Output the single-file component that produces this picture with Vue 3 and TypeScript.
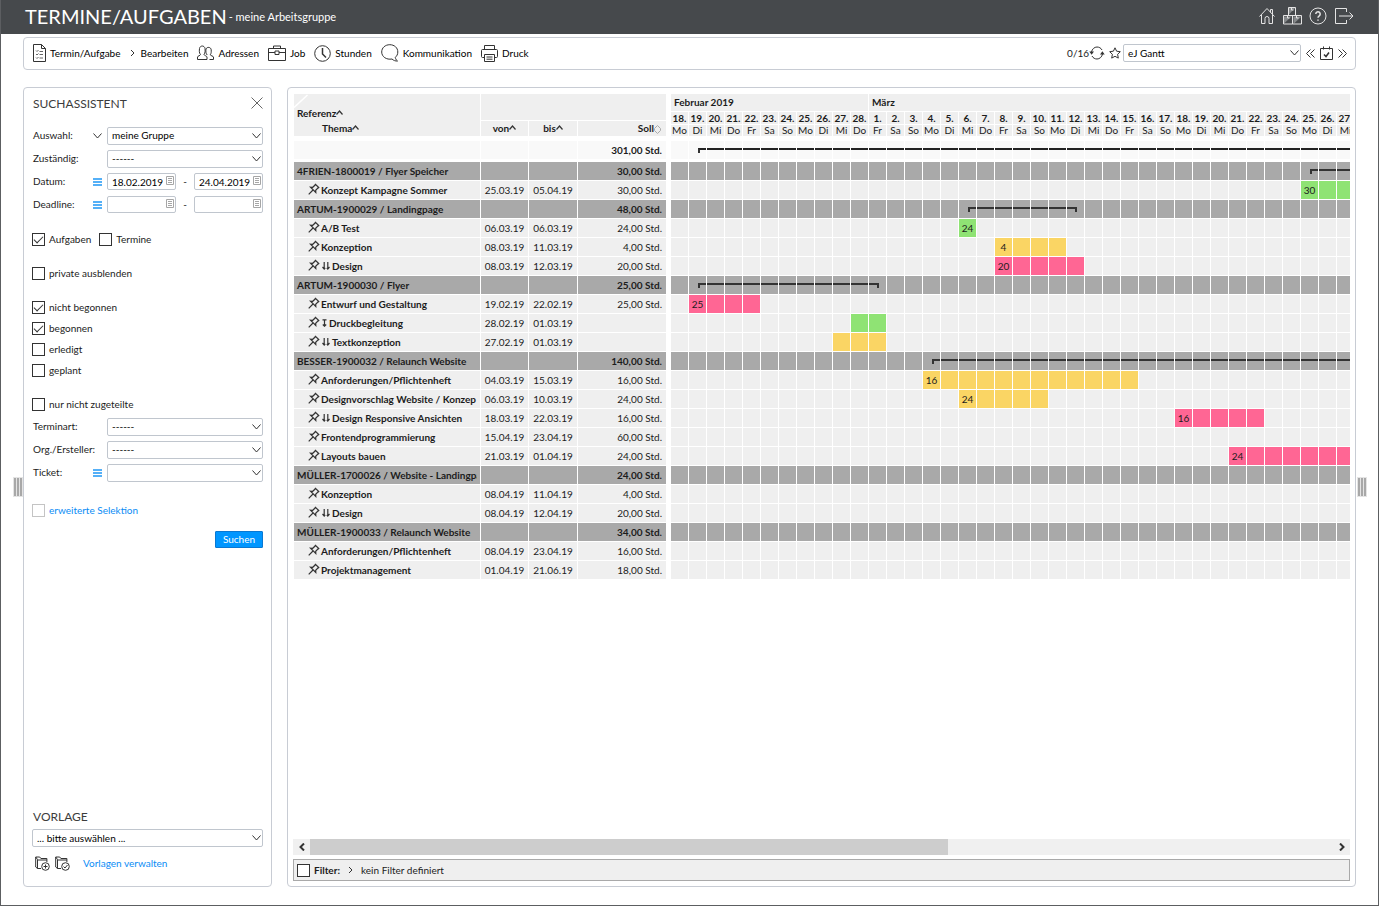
<script setup lang="ts">
import { ref } from 'vue'

type Tone = 'green' | 'yellow' | 'pink'
interface Row {
  kind: 'group' | 'task'
  title: string
  from: string
  to: string
  hours: string
  tone?: Tone
  label?: string
  mark?: 'double' | 'single'
}
interface Cell { tone: string; line: string; label: string }

const DAY = 86400000
const firstDay = Date.UTC(2019, 1, 18)
const dayCount = 38
const weekdays = ['So', 'Mo', 'Di', 'Mi', 'Do', 'Fr', 'Sa']

const days = Array.from({ length: dayCount }, (_, i) => {
  const d = new Date(firstDay + i * DAY)
  return { num: d.getUTCDate() + '.', name: weekdays[d.getUTCDay()] }
})
const months = [
  { name: 'Februar 2019', span: 11 },
  { name: 'März', span: 27 },
]

const group = (title: string, from: string, to: string, hours: string): Row =>
  ({ kind: 'group', title, from, to, hours })
const task = (title: string, from: string, to: string, hours: string, tone: Tone, label = '', mark?: 'double' | 'single'): Row =>
  ({ kind: 'task', title, from, to, hours, tone, label, mark })

const rows: Row[] = [
  group('4FRIEN-1800019 / Flyer Speicher', '25.03.19', '05.04.19', '30,00 Std.'),
  task('Konzept Kampagne Sommer', '25.03.19', '05.04.19', '30,00 Std.', 'green', '30'),
  group('ARTUM-1900029 / Landingpage', '06.03.19', '12.03.19', '48,00 Std.'),
  task('A/B Test', '06.03.19', '06.03.19', '24,00 Std.', 'green', '24'),
  task('Konzeption', '08.03.19', '11.03.19', '4,00 Std.', 'yellow', '4'),
  task('Design', '08.03.19', '12.03.19', '20,00 Std.', 'pink', '20', 'double'),
  group('ARTUM-1900030 / Flyer', '19.02.19', '01.03.19', '25,00 Std.'),
  task('Entwurf und Gestaltung', '19.02.19', '22.02.19', '25,00 Std.', 'pink', '25'),
  task('Druckbegleitung', '28.02.19', '01.03.19', '', 'green', '', 'single'),
  task('Textkonzeption', '27.02.19', '01.03.19', '', 'yellow', '', 'double'),
  group('BESSER-1900032 / Relaunch Website', '04.03.19', '23.04.19', '140,00 Std.'),
  task('Anforderungen/Pflichtenheft', '04.03.19', '15.03.19', '16,00 Std.', 'yellow', '16'),
  task('Designvorschlag Website / Konzep', '06.03.19', '10.03.19', '24,00 Std.', 'yellow', '24'),
  task('Design Responsive Ansichten', '18.03.19', '22.03.19', '16,00 Std.', 'pink', '16', 'double'),
  task('Frontendprogrammierung', '15.04.19', '23.04.19', '60,00 Std.', 'green'),
  task('Layouts bauen', '21.03.19', '01.04.19', '24,00 Std.', 'pink', '24'),
  group('MÜLLER-1700026 / Website - Landingpa', '08.04.19', '12.04.19', '24,00 Std.'),
  task('Konzeption', '08.04.19', '11.04.19', '4,00 Std.', 'yellow'),
  task('Design', '08.04.19', '12.04.19', '20,00 Std.', 'pink', '', 'double'),
  group('MÜLLER-1900033 / Relaunch Website', '01.04.19', '21.06.19', '34,00 Std.'),
  task('Anforderungen/Pflichtenheft', '08.04.19', '23.04.19', '16,00 Std.', 'yellow'),
  task('Projektmanagement', '01.04.19', '21.06.19', '18,00 Std.', 'green'),
]

function dayIndex(text: string): number {
  const [d, m, y] = text.split('.').map(Number)
  return Math.round((Date.UTC(2000 + y, m - 1, d) - firstDay) / DAY)
}
function cellsFor(row: Row): Cell[] {
  const a = dayIndex(row.from)
  const b = dayIndex(row.to)
  return days.map((_, i) => {
    const inside = i >= a && i <= b
    const line = i === a ? 'line start' : i === b ? 'line end' : 'line'
    return {
      tone: inside && row.kind === 'task' ? row.tone ?? '' : '',
      line: inside && row.kind === 'group' ? line : '',
      label: i === a && row.kind === 'task' ? row.label ?? '' : '',
    }
  })
}
const total = cellsFor(group('', '19.02.19', '21.06.19', ''))
const chart = rows.map((row) => ({ kind: row.kind, cells: cellsFor(row) }))

const pane = ref<HTMLElement | null>(null)
function scrollPane(delta: number) {
  if (pane.value) pane.value.scrollLeft += delta
}

const search = ref({
  group: 'meine Gruppe', owner: '------', from: '18.02.2019', to: '24.04.2019', dlFrom: '', dlTo: '',
  tasks: true, dates: false, hidePrivate: false, unassigned: false, extended: false,
  kind: '------', creator: '------', ticket: '',
})
const states = ref([
  { label: 'nicht begonnen', on: true },
  { label: 'begonnen', on: true },
  { label: 'erledigt', on: false },
  { label: 'geplant', on: false },
])
const filterOn = ref(false)
</script>

<template>
  <div class="page">
    <header class="top">
      <h1>TERMINE/AUFGABEN</h1>
      <span class="sub">- meine Arbeitsgruppe</span>
      <nav class="top-icons" aria-label="System">
        <button type="button" aria-label="Start">
          <svg width="18" height="18" viewBox="0 0 18 18"><path d="M1.500 9.500 9 1.500l7.500 8M12.500 5.500V2.500h2v5M3.500 8v8.500h3.500V11.500a2 2 0 0 1 4 0v5h3.500V8" /></svg>
        </button>
        <button type="button" aria-label="Module">
          <svg width="19" height="18" viewBox="0 0 19 18"><path class="shade" d="M5.500 8V.5h7zM.5 17V9.500h8zM10.500 17V9.500h8z" /><path d="M5.500.5h7v8h-7zM.5 8.500h9v8.500h-9zM9.500 8.500h9v8.500h-9z" /><path d="M8.500 1v2h2M4.500 9v2h2M13.500 9v2h2" /></svg>
        </button>
        <button type="button" aria-label="Hilfe">
          <svg width="18" height="18" viewBox="0 0 18 18"><circle cx="9" cy="9" r="8" /><path class="bold" d="M6.800 7a2.200 2.200 0 1 1 3.600 1.700C9.500 9.400 9 9.700 9 10.800M9 12.500v1.300" /></svg>
        </button>
        <button type="button" aria-label="Abmelden">
          <svg width="20" height="18" viewBox="0 0 20 18"><path d="M12.500 5V1.500H1.500v15h11V13M5 9h14M15.500 5.500 19 9l-3.500 3.500" /></svg>
        </button>
      </nav>
    </header>

    <div class="toolbar">
      <button type="button" class="tool">
        <svg width="13" height="18" viewBox="0 0 13 18"><path d="M.5.5h8l4 4v13H.5zM8.500.5v4h4" /><path class="fine" d="M3 6.500l1 1L5.500 6M3 10l1 1 1.500-1.500M3 13.500l1 1L5.500 13M6.500 7.500h3.500M6.500 10.500h3.500M6.500 14h3.500" /></svg>
        Termin/Aufgabe
      </button>
      <button type="button" class="tool edit">
        <svg width="5" height="8" viewBox="0 0 5 8"><path d="M1 1l3 3-3 3" /></svg>
        Bearbeiten
      </button>
      <button type="button" class="tool">
        <svg width="17" height="16" viewBox="0 0 17 16"><path d="M.5 14.500v-2.500c0-1 3-1.500 3-2.500C2 8 2.300 5.500 2.500 3.500 3 .2 7.500.2 8 3.500c.2 2 .3 4.500-1 6 0 1 3 1.500 3 2.500v2.500zM9 4c1-2.500 5-2 5.200.8.100 2 .1 3.500-.9 5 0 1 3.200 1.200 3.200 2.200v2.500h-4M9 4c-.3 2.500-.2 4.500 1.200 6" /></svg>
        Adressen
      </button>
      <button type="button" class="tool">
        <svg width="18" height="16" viewBox="0 0 18 16"><path d="M.5 3.500h17v12H.5zM5.500 3.500v-2.500h7v2.500M.5 7.500h6.500M11 7.500h6.500M7 6h4v3.500H7z" /></svg>
        Job
      </button>
      <button type="button" class="tool">
        <svg width="17" height="17" viewBox="0 0 17 17"><circle cx="8.500" cy="8.500" r="7.800" /><path class="bold" d="M8.500 3v6l3.500 3.500" /></svg>
        Stunden
      </button>
      <button type="button" class="tool">
        <svg width="18" height="18" viewBox="0 0 18 18"><path d="M8.800.7c4.500 0 8 3 8 7.300 0 2.500-1 4-2.500 5.300.2 1.500.8 2.500 2.200 3.700-2 .2-4-.5-5.500-2C5.500 16 .7 12.800.7 8 .7 3.700 4.300.7 8.800.7z" /></svg>
        Kommunikation
      </button>
      <button type="button" class="tool">
        <svg width="17" height="17" viewBox="0 0 17 17"><path d="M3.500 4.500v-4h10v4M3.500 12.500H1.500c-.6 0-1-.4-1-1v-6c0-.6.4-1 1-1h14c.6 0 1 .4 1 1v6c0 .6-.4 1-1 1h-2M3.500 9.500h10v7h-10zM5.500 12h6M5.500 14.200h6" /></svg>
        Druck
      </button>
      <div class="view">
        <span>0/16</span>
        <button type="button" class="reload" aria-label="Aktualisieren">
          <svg width="16" height="14" viewBox="0 0 16 14"><path d="M2.500 6C3 3 5.500 1 8 1c2 0 4 1 5 3M13.500 8c-.5 3-3 5-5.500 5-2 0-4-1-5-3" /><path class="solid" d="M.3 5.500h4.700L2.600 8.700zM11 8.500h4.700L13.400 5.300z" /></svg>
        </button>
        <button type="button" class="star" aria-label="Favorit">
          <svg width="12" height="12" viewBox="0 0 12 12"><path d="M6 .8l1.600 3.400 3.700.5-2.700 2.600.7 3.800L6 9.300l-3.300 1.800.7-3.800L.7 4.700l3.700-.5z" /></svg>
        </button>
        <div class="select view-select">
          <select aria-label="Ansicht"><option>eJ Gantt</option></select>
          <svg width="9" height="6" viewBox="0 0 9 6"><path d="M.5.5l4 4.500 4-4.500" /></svg>
        </div>
        <button type="button" aria-label="Zurück">
          <svg width="9" height="9" viewBox="0 0 9 9"><path d="M4.500.5l-4 4 4 4M8.500.5l-4 4 4 4" /></svg>
        </button>
        <button type="button" aria-label="Heute">
          <svg width="13" height="14" viewBox="0 0 13 14"><path d="M.5 2.500h12v11H.5zM3.500.5v3M9.500.5v3" /><path class="bold" d="M4 8.500l2 2 3-4" /></svg>
        </button>
        <button type="button" aria-label="Vor">
          <svg width="9" height="9" viewBox="0 0 9 9"><path d="M.5.5l4 4-4 4M4.500.5l4 4-4 4" /></svg>
        </button>
      </div>
    </div>

    <div class="body">
      <div class="grip left"><i /><i /><i /></div>

      <aside class="panel side">
        <div class="side-head">
          <h2>SUCHASSISTENT</h2>
          <button type="button" aria-label="Schließen">
            <svg width="12" height="12" viewBox="0 0 12 12"><path d="M.5.5l11 11M11.500.5l-11 11" /></svg>
          </button>
        </div>

        <div class="field">
          <label for="f-group">Auswahl:</label>
          <svg class="opt" width="9" height="6" viewBox="0 0 9 6"><path d="M.5.5l4 4.500 4-4.500" /></svg>
          <div class="select">
            <select id="f-group" v-model="search.group"><option>meine Gruppe</option></select>
            <svg width="9" height="6" viewBox="0 0 9 6"><path d="M.5.5l4 4.500 4-4.500" /></svg>
          </div>
        </div>
        <div class="field">
          <label for="f-owner">Zuständig:</label><span />
          <div class="select">
            <select id="f-owner" v-model="search.owner"><option>------</option></select>
            <svg width="9" height="6" viewBox="0 0 9 6"><path d="M.5.5l4 4.500 4-4.500" /></svg>
          </div>
        </div>
        <div class="field">
          <label for="f-from">Datum:</label>
          <svg class="menu" width="9" height="8" viewBox="0 0 9 8"><path d="M0 1h9M0 4h9M0 7h9" /></svg>
          <div class="range">
            <div class="date">
              <input id="f-from" v-model="search.from" type="text">
              <svg width="8" height="9" viewBox="0 0 8 9"><path d="M.5.5h7v8h-7zM2 2.500h4M2 4.500h4M2 6.500h4" /></svg>
            </div>
            <span>-</span>
            <div class="date">
              <input v-model="search.to" type="text" aria-label="Datum bis">
              <svg width="8" height="9" viewBox="0 0 8 9"><path d="M.5.5h7v8h-7zM2 2.500h4M2 4.500h4M2 6.500h4" /></svg>
            </div>
          </div>
        </div>
        <div class="field">
          <label for="f-dead">Deadline:</label>
          <svg class="menu" width="9" height="8" viewBox="0 0 9 8"><path d="M0 1h9M0 4h9M0 7h9" /></svg>
          <div class="range">
            <div class="date">
              <input id="f-dead" v-model="search.dlFrom" type="text">
              <svg width="8" height="9" viewBox="0 0 8 9"><path d="M.5.5h7v8h-7zM2 2.500h4M2 4.500h4M2 6.500h4" /></svg>
            </div>
            <span>-</span>
            <div class="date">
              <input v-model="search.dlTo" type="text" aria-label="Deadline bis">
              <svg width="8" height="9" viewBox="0 0 8 9"><path d="M.5.5h7v8h-7zM2 2.500h4M2 4.500h4M2 6.500h4" /></svg>
            </div>
          </div>
        </div>

        <div class="checks inline">
          <label class="check"><input v-model="search.tasks" type="checkbox">Aufgaben</label>
          <label class="check"><input v-model="search.dates" type="checkbox">Termine</label>
        </div>
        <div class="checks">
          <label class="check"><input v-model="search.hidePrivate" type="checkbox">private ausblenden</label>
        </div>
        <div class="checks">
          <label v-for="s in states" :key="s.label" class="check"><input v-model="s.on" type="checkbox">{{ s.label }}</label>
        </div>
        <div class="checks">
          <label class="check"><input v-model="search.unassigned" type="checkbox">nur nicht zugeteilte</label>
        </div>

        <div class="field">
          <label for="f-kind">Terminart:</label><span />
          <div class="select">
            <select id="f-kind" v-model="search.kind"><option>------</option></select>
            <svg width="9" height="6" viewBox="0 0 9 6"><path d="M.5.5l4 4.500 4-4.500" /></svg>
          </div>
        </div>
        <div class="field">
          <label for="f-org">Org./Ersteller:</label><span />
          <div class="select">
            <select id="f-org" v-model="search.creator"><option>------</option></select>
            <svg width="9" height="6" viewBox="0 0 9 6"><path d="M.5.5l4 4.500 4-4.500" /></svg>
          </div>
        </div>
        <div class="field">
          <label for="f-ticket">Ticket:</label>
          <svg class="menu" width="9" height="8" viewBox="0 0 9 8"><path d="M0 1h9M0 4h9M0 7h9" /></svg>
          <div class="select">
            <select id="f-ticket" v-model="search.ticket"><option value="" /></select>
            <svg width="9" height="6" viewBox="0 0 9 6"><path d="M.5.5l4 4.500 4-4.500" /></svg>
          </div>
        </div>

        <div class="checks extended">
          <label class="check"><input v-model="search.extended" type="checkbox">erweiterte Selektion</label>
        </div>
        <button type="button" class="primary">Suchen</button>

        <div class="template">
          <h2><label for="f-tpl">VORLAGE</label></h2>
          <div class="select">
            <select id="f-tpl"><option>... bitte auswählen ...</option></select>
            <svg width="9" height="6" viewBox="0 0 9 6"><path d="M.5.5l4 4.500 4-4.500" /></svg>
          </div>
          <div class="template-row">
            <button type="button" aria-label="Vorlage anlegen">
              <svg width="15" height="15" viewBox="0 0 15 15"><path d="M6 12.500H2.500v-9L.7 1v10l1.800 1.500M.7 1h4l1.200 1.500h6V6M2.500 4h9.400" /><circle cx="10.500" cy="10.500" r="3.800" /><path d="M10.500 8.500v4M8.500 10.500h4" /></svg>
            </button>
            <button type="button" aria-label="Vorlage speichern">
              <svg width="15" height="15" viewBox="0 0 15 15"><path d="M6 12.500H2.500v-9L.7 1v10l1.800 1.500M.7 1h4l1.200 1.500h6V6M2.500 4h9.400" /><circle cx="10.500" cy="10.500" r="3.800" /><path d="M8.500 10.500l1.500 1.500 2.500-3" /></svg>
            </button>
            <a href="#vorlagen">Vorlagen verwalten</a>
          </div>
        </div>
      </aside>

      <main class="panel main">
        <div class="gantt">
          <table class="list">
            <colgroup><col class="c-title"><col class="c-from"><col class="c-to"><col class="c-hours"></colgroup>
            <thead>
              <tr class="h-upper">
                <th rowspan="2" class="ref">
                  <svg class="corner" width="14" height="14" viewBox="0 0 14 14"><path d="M0 13.500 13.500 1" /></svg>
                  <div>Referenz<svg class="up" width="7" height="5" viewBox="0 0 7 5"><path d="M.5 4.500l3-3.500 3 3.500" /></svg></div>
                  <div class="theme">Thema<svg class="up" width="7" height="5" viewBox="0 0 7 5"><path d="M.5 4.500l3-3.500 3 3.500" /></svg></div>
                </th>
                <th colspan="3" class="last" />
              </tr>
              <tr class="h-lower">
                <th>von<svg class="up" width="7" height="5" viewBox="0 0 7 5"><path d="M.5 4.500l3-3.500 3 3.500" /></svg></th>
                <th>bis<svg class="up" width="7" height="5" viewBox="0 0 7 5"><path d="M.5 4.500l3-3.500 3 3.500" /></svg></th>
                <th class="last soll">Soll<svg class="sort" width="7" height="9" viewBox="0 0 7 9"><path d="M.5 3.500l3-3 3 3M.5 5.500l3 3 3-3M.5 3.500v2M6.500 3.500v2" /></svg></th>
              </tr>
            </thead>
            <tbody>
              <tr class="sum"><td /><td /><td /><td class="hours last">301,00 Std.</td></tr>
              <tr v-for="(r, i) in rows" :key="i" :class="r.kind">
                <td>
                  <div class="title">
                    <svg v-if="r.kind === 'task'" class="pin" width="12" height="12" viewBox="0 0 12 12"><path d="M7 .8l4.200 4.200M7.700 1.500L4.700 4.300 2.500 4.200l5.300 5.300-.1-2.200L10.500 4.300M5 7L.7 11.300" /></svg>
                    <svg v-if="r.mark === 'double'" class="mark" width="8" height="8" viewBox="0 0 8 8"><path d="M2.200 0v7M5.800 0v7M.5 5L2.200 7l1-1.200M7.500 5L5.800 7l-1-1.200" /></svg>
                    <svg v-if="r.mark === 'single'" class="mark" width="5" height="8" viewBox="0 0 5 8"><path d="M.5.8h4M2.500 1v6M.8 5.500l1.700 1.700 1.700-1.700" /></svg>
                    <span>{{ r.title }}</span>
                  </div>
                </td>
                <td class="day">{{ r.kind === 'task' ? r.from : '' }}</td>
                <td class="day">{{ r.kind === 'task' ? r.to : '' }}</td>
                <td class="hours last">{{ r.hours }}</td>
              </tr>
            </tbody>
          </table>

          <div ref="pane" class="pane">
            <table class="chart">
              <colgroup><col v-for="i in dayCount" :key="i"></colgroup>
              <thead>
                <tr class="months"><th v-for="m in months" :key="m.name" :colspan="m.span">{{ m.name }}</th></tr>
                <tr class="nums"><th v-for="(d, i) in days" :key="i">{{ d.num }}</th></tr>
                <tr class="names"><th v-for="(d, i) in days" :key="i">{{ d.name }}</th></tr>
              </thead>
              <tbody>
                <tr class="sum"><td v-for="(c, i) in total" :key="i"><div v-if="c.line" :class="c.line" /></td></tr>
                <tr v-for="(r, n) in chart" :key="n" :class="r.kind">
                  <td v-for="(c, i) in r.cells" :key="i" :class="c.tone"><div v-if="c.line" :class="c.line" />{{ c.label }}</td>
                </tr>
              </tbody>
            </table>
          </div>
        </div>

        <div class="scroll">
          <button type="button" aria-label="Nach links" @click="scrollPane(-54)">
            <svg width="6" height="8" viewBox="0 0 6 8"><path d="M5 .5L1.500 4 5 7.500" /></svg>
          </button>
          <div class="track"><div class="thumb" /></div>
          <button type="button" aria-label="Nach rechts" @click="scrollPane(54)">
            <svg width="6" height="8" viewBox="0 0 6 8"><path d="M1 .5L4.500 4 1 7.500" /></svg>
          </button>
        </div>

        <div class="filter">
          <label class="check"><input v-model="filterOn" type="checkbox"><b>Filter:</b></label>
          <svg width="5" height="8" viewBox="0 0 5 8"><path d="M1 1l3 3-3 3" /></svg>
          <span>kein Filter definiert</span>
        </div>
      </main>

      <div class="grip right"><i /><i /><i /></div>
    </div>
  </div>
</template>

<style>
html, body { margin: 0; }
</style>

<style scoped>
.page {
  box-sizing: border-box;
  min-height: 100vh;
  display: flex;
  flex-direction: column;
  border: 1px solid #5c5e61;
  border-top: 0;
  background: #fff;
  color: #1c1c1c;
  font: 10px/13px Lato, "Liberation Sans", sans-serif;
}
.page *, .page *::before { box-sizing: border-box; }
button, input, select { font: inherit; color: #000; margin: 0; }
button { padding: 0; border: 0; background: none; cursor: pointer; display: inline-flex; align-items: center; }
svg { display: block; flex: none; fill: none; stroke: #333; stroke-width: 1; }
h1, h2 { margin: 0; font-weight: 400; }

.top {
  height: 34px;
  display: flex;
  align-items: center;
  padding: 0 24px 2px;
  background: #46494c;
  color: #fff;
}
.top h1 { font-size: 20px; line-height: 32px; }
.top .sub { font-size: 11px; margin-left: 2px; }
.top-icons { margin-left: auto; display: flex; gap: 7px; align-items: center; }
.top-icons svg { stroke: #e4e4e4; }
.top-icons .shade { fill: #85888a; stroke: none; }
.bold { stroke-width: 1.5; }
.fine { stroke: #666; }

.toolbar {
  height: 33px;
  margin: 3px 22px 0;
  padding: 0 8px 1px 9px;
  display: flex;
  align-items: center;
  gap: 9px;
  border: 1px solid #c8ccd4;
  border-radius: 4px;
}
.tool { gap: 4px; }
.tool.edit svg { margin-right: 2px; }
.view { margin-left: auto; display: flex; align-items: center; gap: 5px; }
.view > span { margin-right: -5px; }
.view .reload { margin-right: -1px; }
.view .star { margin-right: -3px; }
.view .solid { fill: #333; stroke: none; }
.view-select { width: 178px; }

.body { flex: 1; display: flex; margin: 17px 0 18px; }
.panel { border: 1px solid #c8ccd4; border-radius: 4px; }
.grip { width: 22px; display: flex; align-items: center; gap: 1px; }
.grip i { width: 2px; height: 18px; background: #a8a8a8; box-shadow: 0 0 0 1px #e4e4e4; }
.grip.left { justify-content: flex-end; padding-right: 1px; }
.grip.right { padding-left: 2px; }

.side { width: 249px; margin-right: 15px; padding: 4px 8px 0; display: flex; flex-direction: column; }
.side h2 { font-size: 12px; line-height: 16px; color: #3c3c3c; padding-left: 1px; }
.side-head { height: 24px; margin-bottom: 8px; display: flex; align-items: center; justify-content: space-between; }
.side-head button { margin-top: -2px; }
.side-head svg { stroke: #666; }
.field { height: 23px; display: grid; grid-template-columns: 60px 14px 1fr; align-items: center; padding-left: 1px; }
.field > svg { justify-self: start; }
.field .menu { stroke: #1e96f5; stroke-width: 1.5; }
.select { position: relative; height: 18px; }
.select select {
  display: block;
  width: 100%;
  height: 18px;
  padding: 0 14px 0 4px;
  appearance: none;
  border: 1px solid #c0c6ce;
  border-radius: 2px;
  background: #fff;
}
.select svg { position: absolute; right: 2px; top: 6px; pointer-events: none; }
.range { display: flex; justify-content: space-between; align-items: center; }
.date { position: relative; width: 69px; }
.date input {
  display: block;
  width: 100%;
  height: 17px;
  padding: 0 12px 0 4px;
  border: 1px solid #c0c6ce;
  border-radius: 2px;
}
.date svg { position: absolute; right: 2px; top: 3px; stroke: #a6a6a6; }

.checks { margin-top: 13px; }
.checks.inline { display: flex; gap: 8px; }
.check { height: 21px; display: flex; align-items: center; gap: 4px; }
.check input {
  appearance: none;
  width: 13px;
  height: 13px;
  border: 1px solid #333;
  background: #fff;
  display: grid;
  place-items: center;
}
.check input:checked::before {
  content: "";
  width: 9px;
  height: 5px;
  border: solid #333;
  border-width: 0 0 1px 1px;
  transform: translateY(-1px) rotate(-45deg);
}
.checks.extended { margin-top: 16px; color: #0a8cf5; }
.extended .check input { border-color: #c4c4c4; }
.primary {
  align-self: flex-end;
  justify-content: center;
  width: 48px;
  height: 17px;
  margin-top: 10px;
  border: 1px solid #0a78d2;
  border-radius: 1px;
  background: #0096ff;
  color: #fff;
}
.template { margin-top: auto; padding-bottom: 15px; }
.template .select { margin-top: 4px; }
.template-row { display: flex; align-items: center; gap: 5px; margin-top: 9px; padding-left: 3px; }
.template-row a { margin-left: 8px; color: #0a8cf5; text-decoration: none; }

.main { flex: 1; min-width: 0; padding: 6px 5px 5px; display: flex; flex-direction: column; }
.gantt { flex: 1; display: flex; gap: 5px; padding-left: 1px; align-items: flex-start; }
table { border-collapse: separate; border-spacing: 0; table-layout: fixed; flex: none; }
th, td { padding: 0; border: solid #fff; border-width: 0 1px 1px 0; background: #efefef; background-clip: padding-box; font-weight: 400; white-space: nowrap; overflow: hidden; }
th { font-weight: 700; }
.last { border-right: 0; }
.list { width: 372px; }
.c-title { width: 187px; }
.c-from { width: 48px; }
.c-to { width: 49px; }
.c-hours { width: 88px; }
.h-upper { height: 27px; }
.h-lower { height: 16px; }
.ref { position: relative; vertical-align: bottom; text-align: left; padding-left: 3px; line-height: 15px; }
.corner { position: absolute; left: 0; top: 0; stroke: #fff; stroke-width: 1.5; }
.theme { padding-left: 25px; }
.up { display: inline-block; vertical-align: 2px; stroke-width: 1.2; }
.sort { display: inline-block; vertical-align: -2px; stroke: #aaa; }
.soll { text-align: right; padding-right: 5px; }
.sum td { height: 25px; border-top: 4px solid #fff; border-bottom-width: 3px; background-color: #f9f9f9; }
.group td, .task td { height: 19px; }
.group td { background-color: #a9a9a9; }
.title { display: flex; align-items: center; margin-right: 3px; padding-left: 3px; overflow: hidden; font-weight: 700; }
.task .title { padding-left: 14px; }
.pin { margin: 0 1px 2px 0; stroke-width: 1.2; }
.mark { margin: 0 2px 0 1px; stroke-width: 1.2; }
.day { text-align: center; }
.hours { text-align: right; padding-right: 4px; }
.sum .hours, .group .hours { font-weight: 700; }

.pane { flex: 1; min-width: 0; overflow: hidden; }
.chart { width: 684px; }
.months { height: 18px; }
.months th { text-align: left; padding-left: 3px; }
.nums { height: 13px; }
.names { height: 12px; }
.nums th, .names th { line-height: 11px; overflow: visible; }
.names th { font-weight: 400; }
.chart td { text-align: center; }
.line { height: 5px; border-top: 2px solid #222; }
.group .line { border-top-color: #333; }
.line.start { margin-left: 9px; border-left: 2px solid #333; }
.line.end { margin-right: 7px; border-right: 2px solid #333; }
.chart .green { background-color: #8fe374; }
.chart .yellow { background-color: #fad564; }
.chart .pink { background-color: #ff6694; }

.scroll { height: 16px; display: flex; background: #f0f0f0; }
.scroll button { width: 17px; justify-content: center; }
.scroll svg { stroke-width: 2; }
.track { flex: 1; }
.thumb { width: 62.4%; height: 16px; background: #cdcdcd; }
.filter {
  height: 22px;
  margin-top: 4px;
  padding-left: 3px;
  display: flex;
  align-items: center;
  gap: 8px;
  border: 1px solid #a9a9a9;
  background: #efefef;
}
</style>
